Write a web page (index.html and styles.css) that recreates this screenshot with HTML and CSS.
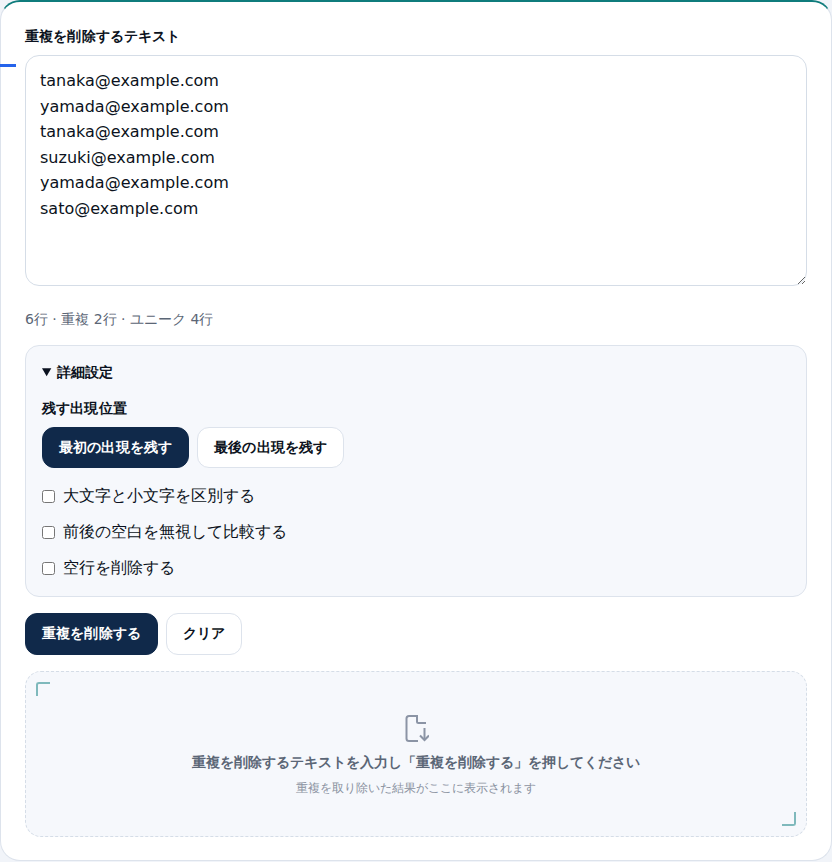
FILE: index.html
```html
<!DOCTYPE html>
<html lang="ja">

<head>
    <meta charset="UTF-8">
    <meta name="viewport" content="width=device-width, initial-scale=1.0">
    <title>重複行の削除</title>
    <link rel="stylesheet" href="styles.css">
</head>

<body>
    <main class="card">
        <span class="side-mark"></span>

        <label class="field-label" for="source">重複を削除するテキスト</label>
        <textarea id="source" class="source" spellcheck="false">tanaka@example.com
yamada@example.com
tanaka@example.com
suzuki@example.com
yamada@example.com
sato@example.com</textarea>
        <p class="stats">6行 · 重複 2行 · ユニーク 4行</p>

        <details class="options" open>
            <summary>詳細設定</summary>
            <p class="options-label">残す出現位置</p>
            <div class="btn-row">
                <button class="btn btn-primary">最初の出現を残す</button>
                <button class="btn">最後の出現を残す</button>
            </div>
            <div class="checks">
                <label class="check"><input type="checkbox">大文字と小文字を区別する</label>
                <label class="check"><input type="checkbox">前後の空白を無視して比較する</label>
                <label class="check"><input type="checkbox">空行を削除する</label>
            </div>
        </details>

        <div class="btn-row actions">
            <button class="btn btn-primary">重複を削除する</button>
            <button class="btn">クリア</button>
        </div>

        <section class="result">
            <span class="corner corner-tl"></span>
            <span class="corner corner-br"></span>
            <svg class="result-icon" width="26" height="28" viewBox="0 0 26 28" fill="none" stroke="#8b94a5" stroke-width="2">
                <path d="M14 2H6a2.500 2.500 0 0 0-2.500 2.500v20A2.500 2.500 0 0 0 6 27h9"/>
                <path d="M14 1v6.500a1.500 1.500 0 0 0 1.500 1.500H23"/>
                <path d="M21.500 14v12"/>
                <path d="M17 21.500l4.500 4.500 4.500-4.500"/>
            </svg>
            <p class="result-title">重複を削除するテキストを入力し「重複を削除する」を押してください</p>
            <p class="result-sub">重複を取り除いた結果がここに表示されます</p>
        </section>
    </main>
</body>

</html>
```

FILE: styles.css
```css
body {
    margin: 0;
    background: #f1f4f9;
    color: #0b1220;
    font-family: "DejaVu Sans", sans-serif;
}

.card {
    position: relative;
    box-sizing: border-box;
    height: 861px;
    padding: 25px 24px 0;
    background: #fff;
    border: 1px solid #dde3ec;
    border-top: 2px solid #0f7c7c;
    border-radius: 20px;
}

.side-mark {
    position: absolute;
    top: 62px;
    left: -1px;
    width: 16px;
    height: 3px;
    background: #2563eb;
}

.field-label {
    display: block;
    margin-bottom: 9px;
    font-size: 14.08px;
    font-weight: 700;
    letter-spacing: 0.01em;
    line-height: 19px;
}

.source {
    display: block;
    box-sizing: border-box;
    width: 100%;
    height: 231px;
    padding: 12px 14px;
    border: 1px solid #d5dde7;
    border-radius: 14px;
    background: #fff;
    color: #0b1220;
    font-family: inherit;
    font-size: 16px;
    line-height: 1.6;
}

.stats {
    margin: 24px 0 17px;
    color: #5b6676;
    font-size: 14px;
    line-height: 18px;
}

.options {
    box-sizing: border-box;
    height: 252px;
    padding: 16px;
    background: #f6f8fc;
    border: 1px solid #dde3ec;
    border-radius: 14px;
}

.options summary {
    font-size: 14.08px;
    font-weight: 700;
    line-height: 20px;
    cursor: pointer;
}

.options-label {
    margin: 16px 0 9px;
    font-size: 14.08px;
    font-weight: 700;
    letter-spacing: 0.01em;
    line-height: 20px;
}

.btn-row {
    display: flex;
    gap: 8px;
}

.btn {
    height: 41px;
    padding: 0 16px;
    background: #fff;
    border: 1px solid #dde3ec;
    border-radius: 12px;
    color: #0b1220;
    font-family: inherit;
    font-size: 14.08px;
    font-weight: 700;
    letter-spacing: 0.01em;
    cursor: pointer;
}

.btn-primary {
    background: #10294a;
    border-color: #10294a;
    color: #fff;
}

.checks {
    display: flex;
    flex-direction: column;
    gap: 12px;
    margin-top: 16px;
}

.check {
    display: flex;
    align-items: center;
    gap: 8px;
    font-size: 16px;
    line-height: 24px;
}

.check input {
    width: 13px;
    height: 13px;
    margin: 0;
}

.actions {
    margin-top: 16px;
}

.actions .btn {
    height: 42px;
    padding-bottom: 1px;
}

.result {
    position: relative;
    box-sizing: border-box;
    display: flex;
    flex-direction: column;
    align-items: center;
    height: 166px;
    margin-top: 16px;
    padding-top: 42px;
    background: #f6f8fc;
    border: 1px dashed #d5dde7;
    border-radius: 16px;
}

.corner {
    position: absolute;
    width: 12px;
    height: 12px;
    border: 2px solid #7fb9bc;
}

.corner-tl {
    top: 10px;
    left: 10px;
    border-right: 0;
    border-bottom: 0;
    border-top-left-radius: 3px;
}

.corner-br {
    right: 10px;
    bottom: 10px;
    border-left: 0;
    border-top: 0;
    border-bottom-right-radius: 3px;
}

.result-icon {
    display: block;
}

.result-title {
    margin: 10px 0 0;
    color: #5b6676;
    font-size: 14.08px;
    font-weight: 700;
    line-height: 20px;
}

.result-sub {
    margin: 6px 0 0;
    color: #8a92a0;
    font-size: 12px;
    line-height: 20px;
}
```
